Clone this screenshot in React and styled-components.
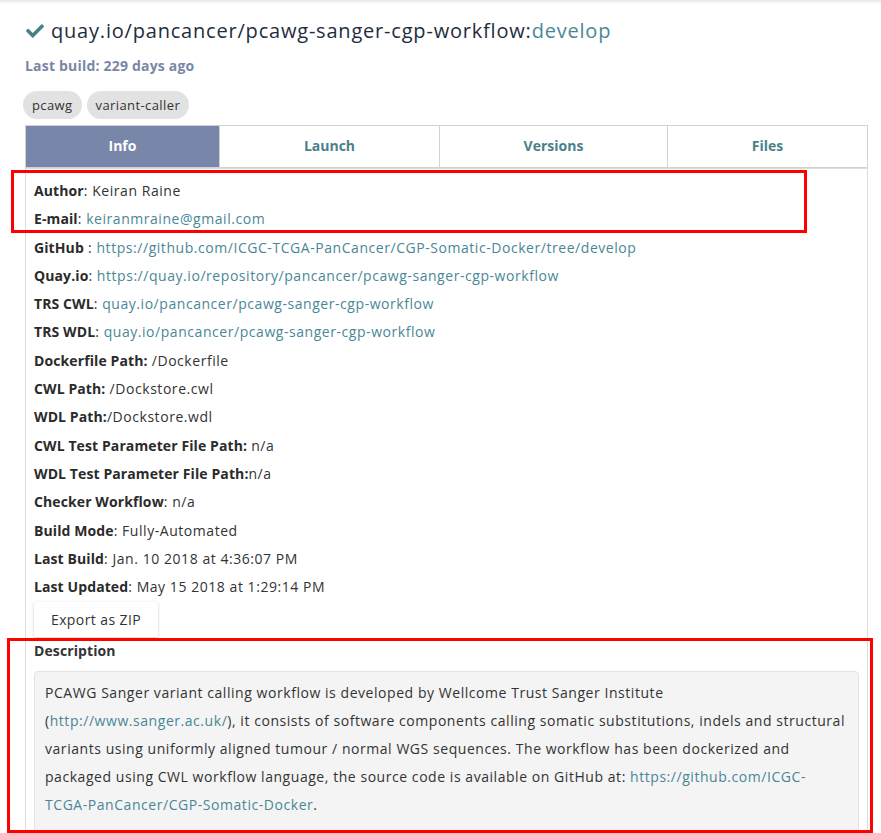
import React from "react";
import styled, { createGlobalStyle } from "styled-components";
import { FaCheck } from "react-icons/fa";

const GlobalStyle = createGlobalStyle`
  body {
    margin: 0;
    background: #fff;
    font-family: "Open Sans", "Liberation Sans", sans-serif;
    color: #333;
  }
  a {
    color: #4a8796;
    text-decoration: none;
  }
`;

const info = [
  { label: "Author", sep: ": ", value: "Keiran Raine" },
  { label: "E-mail", sep: ": ", value: "keiranmraine@gmail.com", link: true },
  {
    label: "GitHub",
    sep: " : ",
    value: "https://github.com/ICGC-TCGA-PanCancer/CGP-Somatic-Docker/tree/develop",
    link: true,
  },
  {
    label: "Quay.io",
    sep: ": ",
    value: "https://quay.io/repository/pancancer/pcawg-sanger-cgp-workflow",
    link: true,
  },
  { label: "TRS CWL", sep: ": ", value: "quay.io/pancancer/pcawg-sanger-cgp-workflow", link: true },
  { label: "TRS WDL", sep: ": ", value: "quay.io/pancancer/pcawg-sanger-cgp-workflow", link: true },
  { label: "Dockerfile Path:", sep: " ", value: "/Dockerfile" },
  { label: "CWL Path:", sep: " ", value: "/Dockstore.cwl" },
  { label: "WDL Path:", sep: "", value: "/Dockstore.wdl" },
  { label: "CWL Test Parameter File Path:", sep: " ", value: "n/a" },
  { label: "WDL Test Parameter File Path:", sep: "", value: "n/a" },
  { label: "Checker Workflow", sep: ": ", value: "n/a" },
  { label: "Build Mode", sep: ": ", value: "Fully-Automated" },
  { label: "Last Build", sep: ": ", value: "Jan. 10 2018 at 4:36:07 PM" },
  { label: "Last Updated", sep: ": ", value: "May 15 2018 at 1:29:14 PM" },
];

const tabs = [
  { name: "Info", width: "194px" },
  { name: "Launch", width: "220px" },
  { name: "Versions", width: "228px" },
  { name: "Files", width: "1fr" },
];

const App = () => {
  return (
    <>
      <GlobalStyle />
      <TopShade />
      <Page>
        <Title>
          <CheckIcon />
          <span>quay.io/pancancer/pcawg-sanger-cgp-workflow:</span>
          <Branch>develop</Branch>
        </Title>
        <LastBuild>Last build: 229 days ago</LastBuild>
        <Tags>
          <Tag>pcawg</Tag>
          <Tag>variant-caller</Tag>
        </Tags>

        <TabBar $cols={tabs.map((t) => t.width).join(" ")}>
          {tabs.map((t, i) => (
            <Tab key={t.name} $active={i === 0}>
              {t.name}
            </Tab>
          ))}
        </TabBar>

        <Panel>
          {info.map((row) => (
            <InfoRow key={row.label}>
              <Label>{row.label}</Label>
              {row.sep}
              {row.link ? <a href="#">{row.value}</a> : row.value}
            </InfoRow>
          ))}
          <ExportButton>Export as ZIP</ExportButton>
          <SectionTitle>Description</SectionTitle>
          <DescriptionBox>
            PCAWG Sanger variant calling workflow is developed by Wellcome Trust Sanger
            Institute (<a href="#">http://www.sanger.ac.uk/</a>), it consists of software
            components calling somatic substitutions, indels and structural variants using
            uniformly aligned tumour / normal WGS sequences. The workflow has been dockerized
            and packaged using CWL workflow language, the source code is available on GitHub
            at: <a href="#">https://github.com/ICGC-TCGA-PanCancer/CGP-Somatic-Docker</a>.
          </DescriptionBox>
        </Panel>

        <Highlight $top={166} $left={11} $width={796} $height={63} />
        <Highlight $top={634} $left={7} $width={866} $height={195} />
      </Page>
    </>
  );
};

const TopShade = styled.div`
  height: 4px;
  background: linear-gradient(#e6e6e6, #fff);
`;

const Page = styled.div`
  position: relative;
  height: 829px;
  overflow: hidden;
  padding: 13px 13px 0 25px;
  box-sizing: border-box;
`;

const Title = styled.h3`
  display: flex;
  align-items: center;
  margin: 0;
  font-size: 20px;
  line-height: 28px;
  font-weight: 400;
  color: #1f2d3d;
  letter-spacing: 0.8px;
  white-space: nowrap;
`;

const CheckIcon = styled(FaCheck)`
  color: #4a7f8c;
  width: 20px;
  height: 18px;
  margin-right: 6px;
`;

const Branch = styled.span`
  color: #4a8796;
`;

const LastBuild = styled.div`
  margin-top: 12px;
  font-size: 14px;
  line-height: 18px;
  font-weight: 700;
  color: #7b86a6;
  letter-spacing: 0.2px;
`;

const Tags = styled.div`
  display: flex;
  gap: 5px;
  margin: 16px 0 0 -2px;
`;

const Tag = styled.span`
  background: #e2e2e2;
  border-radius: 14px;
  padding: 0 9px;
  height: 28px;
  line-height: 28px;
  font-size: 13px;
  letter-spacing: 0.4px;
  color: #333;
`;

const TabBar = styled.div`
  display: grid;
  grid-template-columns: ${(p) => p.$cols};
  margin-top: 6px;
  border-bottom: 1px solid #ddd;
`;

const Tab = styled.div`
  height: 41px;
  line-height: 40px;
  text-align: center;
  font-size: 14px;
  font-weight: 700;
  border: 1px solid #d2d2d2;
  margin-right: -1px;
  background: ${(p) => (p.$active ? "#7886a9" : "#fff")};
  color: ${(p) => (p.$active ? "#fff" : "#4a7f8c")};
  &:last-child {
    margin-right: 0;
  }
`;

const Panel = styled.div`
  border-left: 1px solid #ddd;
  border-right: 1px solid #ddd;
  padding: 8px 8px 0 8px;
  font-size: 14px;
  letter-spacing: 0.55px;
`;

const InfoRow = styled.div`
  line-height: 28.3px;
  color: #333;
  white-space: nowrap;
`;

const Label = styled.span`
  font-weight: 700;
  color: #2b2b2b;
  letter-spacing: 0.1px;
`;

const ExportButton = styled.button`
  display: block;
  width: 124px;
  height: 35px;
  margin-top: 1px;
  border: none;
  border-radius: 2px;
  background: #fff;
  box-shadow: 0 1px 3px rgba(0, 0, 0, 0.22);
  font-family: inherit;
  font-size: 14px;
  letter-spacing: 0.4px;
  color: #333;
`;

const SectionTitle = styled.div`
  font-weight: 700;
  line-height: 28px;
  letter-spacing: 0.1px;
  margin-bottom: 6px;
`;

const DescriptionBox = styled.div`
  background: #f4f4f4;
  border: 1px solid #e3e3e3;
  border-radius: 4px;
  padding: 7px 10px 30px 10px;
  line-height: 28px;
  color: #333;
`;

const Highlight = styled.div`
  position: absolute;
  top: ${(p) => p.$top}px;
  left: ${(p) => p.$left}px;
  width: ${(p) => p.$width}px;
  height: ${(p) => p.$height}px;
  border: 3px solid #ff0000;
  box-sizing: border-box;
  pointer-events: none;
`;

export default App;
